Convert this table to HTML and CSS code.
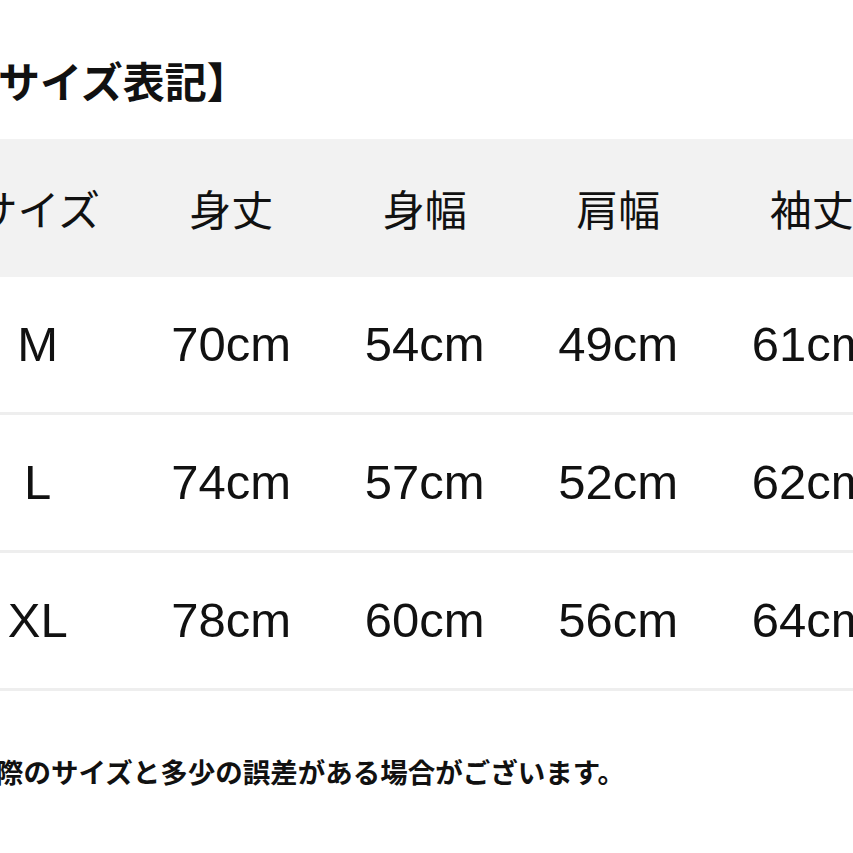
FILE: index.html
```html
<!DOCTYPE html>
<html lang="ja">
<head>
<meta charset="utf-8">
<link rel="stylesheet" href="styles.css">
</head>
<body>
<div class="page">
  <h1 class="title">【サイズ表記】</h1>
  <div class="table">
    <div class="row head">
      <div class="cell">サイズ</div>
      <div class="cell">身丈</div>
      <div class="cell">身幅</div>
      <div class="cell">肩幅</div>
      <div class="cell">袖丈</div>
    </div>
    <div class="row">
      <div class="cell">M</div>
      <div class="cell">70cm</div>
      <div class="cell">54cm</div>
      <div class="cell">49cm</div>
      <div class="cell">61cm</div>
    </div>
    <div class="row">
      <div class="cell">L</div>
      <div class="cell">74cm</div>
      <div class="cell">57cm</div>
      <div class="cell">52cm</div>
      <div class="cell">62cm</div>
    </div>
    <div class="row">
      <div class="cell">XL</div>
      <div class="cell">78cm</div>
      <div class="cell">60cm</div>
      <div class="cell">56cm</div>
      <div class="cell">64cm</div>
    </div>
  </div>
  <p class="note">※実際のサイズと多少の誤差がある場合がございます。</p>
</div>
</body>
</html>
```
FILE: styles.css
```css
html, body {
  margin: 0;
  padding: 0;
  background: #ffffff;
  overflow: hidden;
}
body {
  font-family: "Noto Sans CJK JP", "Noto Sans", sans-serif;
  color: #111111;
}
.page {
  margin-left: -59px;
  width: 968px;
  padding-top: 52px;
}
.title {
  margin: 0;
  padding-left: 15px;
  font-size: 42px;
  font-weight: 700;
  line-height: 56px;
  letter-spacing: 0;
}
.table {
  margin-top: 31px;
}
.row {
  display: grid;
  grid-template-columns: repeat(5, 193.5px);
  height: 135px;
  border-bottom: 3px solid #eeeeee;
  align-items: center;
}
.row.head {
  background: #f2f2f2;
  border-bottom: 0;
  height: 138px;
}
.cell {
  text-align: center;
  font-family: "Liberation Sans", "Noto Sans CJK JP", sans-serif;
  font-size: 49px;
  line-height: 1;
  white-space: nowrap;
}
.head .cell {
  font-family: "Noto Sans CJK JP", sans-serif;
  font-size: 42px;
}
.note {
  margin: 62px 0 0 0;
  font-size: 27.5px;
  font-weight: 700;
  line-height: 36px;
  white-space: nowrap;
}
```
